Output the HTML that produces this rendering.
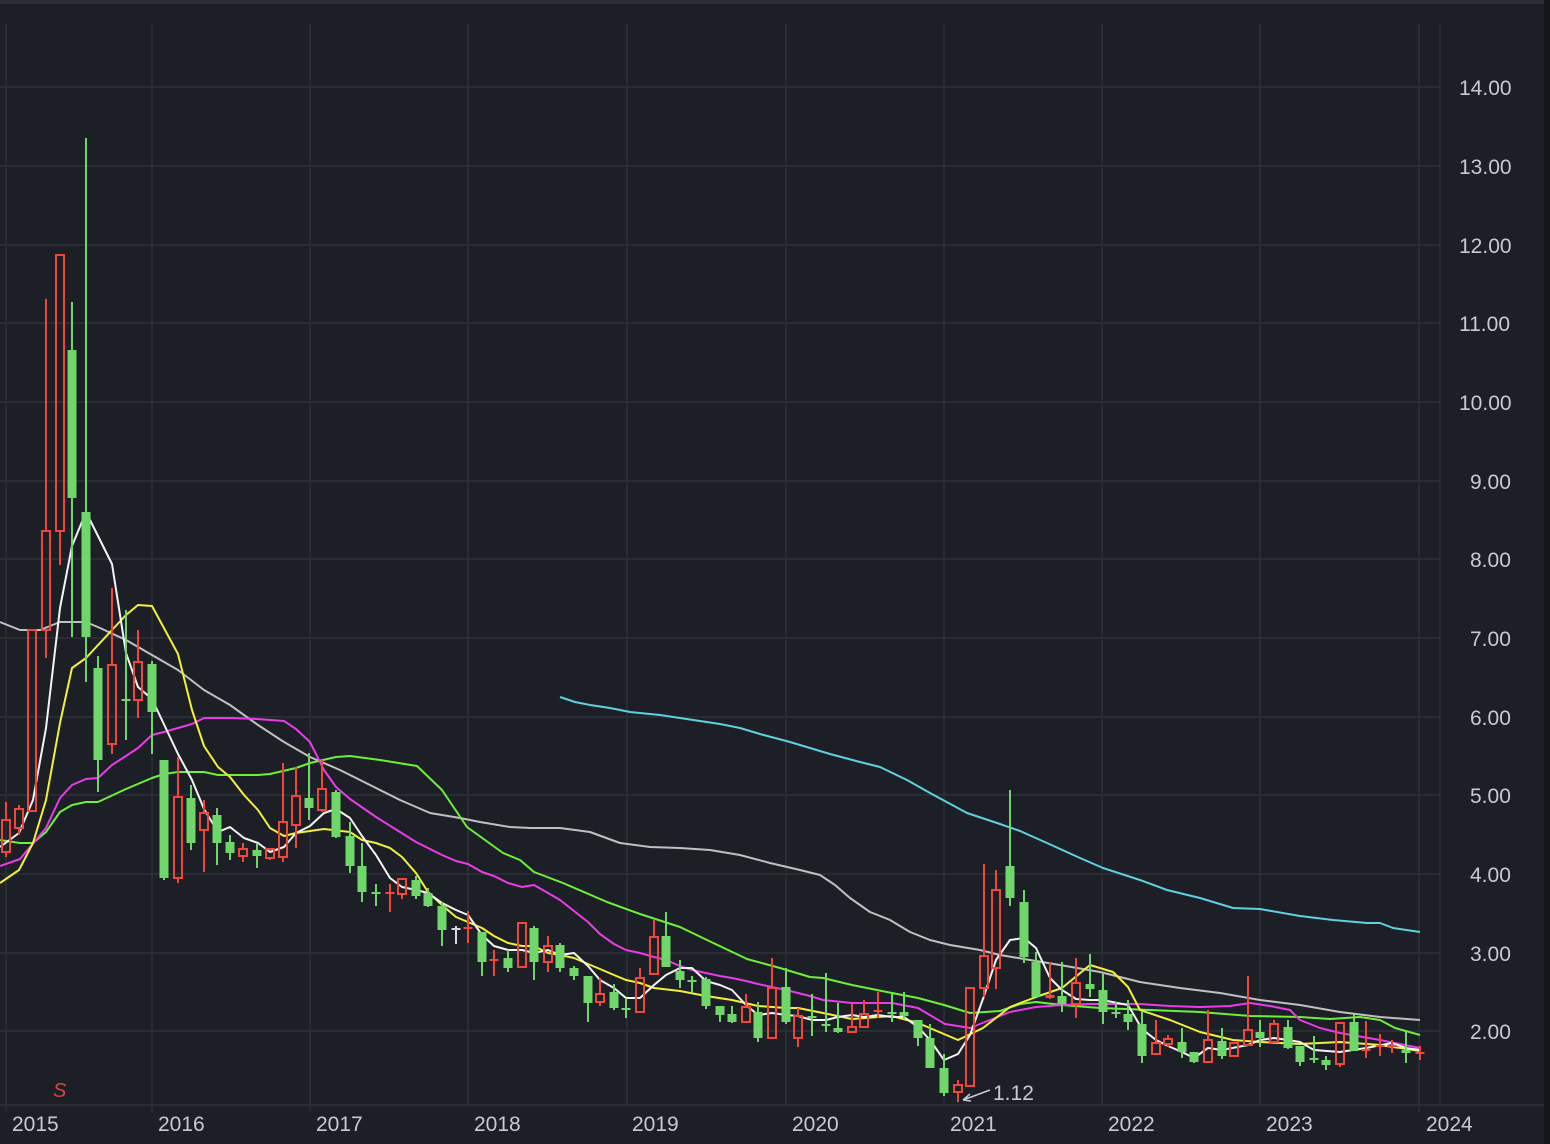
<!DOCTYPE html>
<html><head><meta charset="utf-8"><style>
html,body{margin:0;padding:0;background:#1d1f26;width:1550px;height:1144px;overflow:hidden}
svg{display:block}
text{font-family:"Liberation Sans",sans-serif}
</style></head><body>
<svg id="c" width="1550" height="1144" viewBox="0 0 1550 1144" xmlns="http://www.w3.org/2000/svg">
<rect x="0" y="0" width="1550" height="1144" fill="#1d1f26"/>
<rect x="0" y="0" width="1550" height="4" fill="#2b2d36"/>
<rect x="1544" y="0" width="6" height="1144" fill="#141519"/>
<g id="grid" stroke="#2a2c34" stroke-width="2"></g>
<line x1="0" y1="1105" x2="1544" y2="1105" stroke="#2a2c34" stroke-width="2"/>
<g id="ma" fill="none" stroke-width="2" stroke-linejoin="round"></g>
<g id="cd"></g>
<g fill="#c9cad1" font-size="21">
<text x="1459" y="95">14.00</text><text x="1459" y="174">13.00</text><text x="1459" y="253">12.00</text>
<text x="1459" y="331">11.00</text><text x="1459" y="410">10.00</text><text x="1470" y="489">9.00</text>
<text x="1470" y="567">8.00</text><text x="1470" y="646">7.00</text><text x="1470" y="725">6.00</text>
<text x="1470" y="803">5.00</text><text x="1470" y="882">4.00</text><text x="1470" y="961">3.00</text>
<text x="1470" y="1039">2.00</text>
<text x="12" y="1131">2015</text><text x="158" y="1131">2016</text><text x="316" y="1131">2017</text>
<text x="474" y="1131">2018</text><text x="632" y="1131">2019</text><text x="792" y="1131">2020</text>
<text x="950" y="1131">2021</text><text x="1108" y="1131">2022</text><text x="1266" y="1131">2023</text>
<text x="1426" y="1131">2024</text>
<text x="993" y="1100">1.12</text>
</g>
<text x="53" y="1097" fill="#d8453a" font-size="20" font-family="Liberation Serif,serif" font-style="italic">S</text>
<path d="M963 1100 L990 1090 M963 1100 L970 1094 M963 1100 L971 1101" stroke="#c9cad1" stroke-width="1.5" fill="none"/>
</svg>
<script>
var ns="http://www.w3.org/2000/svg",g=document.getElementById('grid'),m=document.getElementById('ma'),cd=document.getElementById('cd');
function el(p,t,a){var e=document.createElementNS(ns,t);for(var k in a)e.setAttribute(k,a[k]);p.appendChild(e);return e}
[6,152,310,468,627,786,944,1102,1260,1419,1440].forEach(function(x){el(g,'line',{x1:x,y1:24,x2:x,y2:(x==1440?1105:1104)})});
[87,166,245,323,402,481,559,638,717,795,874,953,1031].forEach(function(y){el(g,'line',{x1:0,y1:y,x2:1440,y2:y})});
el(g,'line',{x1:6,y1:1105,x2:6,y2:1112});el(g,'line',{x1:152,y1:1105,x2:152,y2:1112});el(g,'line',{x1:310,y1:1105,x2:310,y2:1112});el(g,'line',{x1:1419,y1:1105,x2:1419,y2:1112});
var L={
'#5fd0e0':"560,697 575,702 590,705 610,708 630,712 660,715 680,718 700,721 720,724 740,728 760,734 790,742 810,748 830,754 860,762 880,767 907,780 930,793 967,813 997,823 1020,831 1047,843 1080,858 1103,868 1140,880 1167,890 1200,898 1233,908 1260,909 1300,916 1333,920 1367,923 1380,923 1393,928 1420,932",
'#c0c0c0':"0,622 20,630 40,630 60,622 86,622 100,628 126,640 152,655 178,670 204,690 230,705 258,725 284,742 310,757 340,770 370,785 400,800 430,813 460,818 480,822 510,827 530,828 560,828 590,832 620,843 650,847 680,848 710,850 740,855 770,863 800,870 820,875 835,885 850,898 870,912 890,920 910,932 930,940 950,945 980,950 1000,955 1030,960 1060,965 1100,972 1140,982 1180,988 1220,993 1260,1000 1300,1005 1340,1012 1380,1017 1420,1020",
'#6ef03a':"0,840 20,843 33,843 46,832 60,812 72,805 86,802 98,802 126,789 152,778 164,774 178,772 204,772 218,775 258,775 270,774 296,768 310,763 336,757 350,756 380,760 417,766 442,790 467,827 503,853 520,860 534,872 563,883 607,902 640,914 680,927 707,940 747,959 780,968 810,977 823,978 852,985 892,993 918,998 944,1005 970,1013 1000,1011 1020,1004 1036,1002 1062,1005 1100,1008 1150,1010 1200,1012 1250,1016 1300,1017 1330,1019 1360,1017 1380,1020 1395,1028 1420,1035",
'#e83ce8':"0,866 20,859 46,828 60,798 72,785 86,779 98,778 112,765 126,756 138,748 152,735 164,732 178,728 192,724 204,718 230,718 257,719 284,721 296,729 310,742 324,770 336,787 350,799 376,817 400,832 416,842 428,848 442,855 456,861 468,864 482,872 494,876 508,883 522,887 534,885 548,893 560,900 574,911 588,922 600,934 614,944 626,950 640,953 654,957 666,960 680,966 692,970 706,973 720,976 732,978 746,981 758,984 772,987 786,990 810,996 823,1000 852,1003 892,1003 918,1008 945,1024 970,1028 990,1020 1010,1012 1036,1007 1062,1005 1090,1004 1140,1004 1170,1006 1200,1007 1230,1006 1250,1003 1270,1006 1290,1010 1300,1020 1320,1028 1340,1033 1380,1040 1420,1048",
'#f4f03a':"0,883 19,870 33,843 46,800 60,723 72,668 86,658 112,630 126,615 138,605 152,606 178,654 192,710 204,746 218,767 230,777 244,795 258,810 270,828 284,836 296,833 324,829 350,832 362,840 376,843 390,848 402,857 416,873 428,892 442,905 456,917 468,922 482,928 494,936 508,943 522,946 534,946 548,953 560,955 574,958 588,964 600,969 614,975 626,980 640,983 654,988 680,991 706,996 732,1000 758,1006 786,1008 798,1008 823,1013 852,1019 892,1016 918,1023 958,1040 983,1028 1010,1007 1036,997 1062,988 1090,965 1113,972 1128,987 1140,1010 1170,1020 1200,1032 1233,1040 1260,1042 1300,1044 1340,1042 1380,1045 1420,1051",
'#f4f4f4':"0,847 19,833 33,800 46,728 60,608 72,546 86,512 112,564 126,653 138,687 152,699 178,754 192,780 204,809 218,832 230,827 244,838 258,843 270,852 284,847 296,833 310,826 324,813 336,809 350,818 362,836 376,855 390,878 402,887 416,890 428,893 442,903 456,910 468,915 482,935 494,946 508,950 522,950 534,953 548,950 560,955 574,953 588,966 600,980 614,988 626,998 640,998 654,985 666,975 680,968 692,968 706,981 720,985 732,990 746,1005 758,1015 772,1013 786,1015 798,1016 812,1020 826,1020 838,1017 852,1015 864,1017 878,1015 892,1017 904,1017 918,1027 930,1040 944,1060 958,1054 970,1035 984,996 996,960 1010,940 1024,938 1036,948 1050,978 1062,990 1076,999 1090,1000 1102,1000 1128,1005 1142,1029 1156,1040 1168,1046 1182,1052 1194,1058 1208,1048 1222,1050 1248,1045 1260,1040 1274,1038 1288,1040 1300,1042 1314,1050 1340,1052 1366,1048 1392,1043 1406,1048 1420,1050"};
for(var c in L)el(m,'polyline',{points:L[c],stroke:c});
var D=[
[6,820,852,802,857,'r'],[19,809,828,805,835,'r'],[32,630,811,630,812,'r'],[46,531,630,299,658,'r'],[60,255,531,255,565,'r'],
[72,350,498,302,637,'g'],[86,512,637,138,682,'g'],[98,668,760,656,792,'g'],[112,665,744,588,754,'r'],[126,699,701,610,740,'g'],
[138,662,700,630,718,'r'],[152,664,712,661,754,'g'],[164,760,878,760,880,'g'],[178,797,878,757,883,'r'],[191,798,843,785,850,'g'],
[204,813,830,800,872,'r'],[217,815,843,808,865,'g'],[230,842,853,835,860,'g'],[243,849,856,843,862,'r'],[257,850,856,843,868,'g'],
[270,849,858,848,860,'r'],[283,822,857,763,862,'r'],[296,796,825,767,848,'r'],[309,798,808,753,820,'g'],[322,789,810,760,812,'r'],
[336,792,837,790,838,'g'],[350,836,866,822,873,'g'],[362,866,892,843,902,'g'],[376,892,894,884,906,'g'],[390,892,894,884,912,'r'],
[402,879,894,878,899,'r'],[416,880,896,876,899,'g'],[428,893,906,888,907,'g'],[442,906,930,902,946,'g'],[456,928,930,926,944,'w'],
[468,927,929,911,943,'r'],[482,932,962,932,976,'g'],[494,959,961,950,976,'r'],[508,958,968,950,972,'g'],[522,923,967,922,968,'r'],
[534,928,962,926,980,'g'],[548,946,962,936,972,'r'],[560,945,968,943,972,'g'],[574,968,976,966,980,'g'],[588,976,1003,976,1022,'g'],
[600,994,1002,978,1006,'r'],[614,992,1008,984,1010,'g'],[626,1008,1010,998,1018,'g'],[640,978,1012,968,1012,'r'],[654,937,974,919,975,'r'],
[666,936,967,912,967,'g'],[680,971,980,960,988,'g'],[692,980,982,976,993,'g'],[706,979,1006,977,1009,'g'],[720,1006,1015,1006,1022,'g'],
[732,1014,1022,1006,1023,'g'],[746,1007,1022,994,1023,'r'],[758,1012,1038,1002,1042,'g'],[772,988,1038,958,1039,'r'],[786,987,1022,968,1024,'g'],
[798,1016,1038,1008,1047,'r'],[812,1016,1018,994,1036,'g'],[826,1024,1026,973,1032,'g'],[838,1028,1032,1003,1033,'g'],[852,1027,1032,1004,1032,'r'],
[864,1014,1027,1000,1027,'r'],[878,1010,1012,992,1018,'r'],[892,1012,1014,994,1022,'g'],[904,1012,1016,992,1019,'g'],[918,1020,1038,1020,1046,'g'],
[930,1038,1068,1024,1068,'g'],[944,1068,1093,1054,1096,'g'],[958,1085,1092,1080,1102,'r'],[970,988,1086,988,1086,'r'],[984,956,988,864,997,'r'],
[996,890,968,870,989,'r'],[1010,866,898,790,906,'g'],[1024,902,957,890,963,'g'],[1036,962,997,952,997,'g'],[1050,995,998,962,999,'r'],
[1062,996,1004,962,1012,'g'],[1076,983,1004,958,1018,'r'],[1090,984,989,954,997,'g'],[1103,990,1012,974,1024,'g'],[1116,1012,1014,1002,1018,'g'],
[1128,1014,1022,1000,1030,'g'],[1142,1024,1056,1012,1063,'g'],[1156,1043,1054,1020,1055,'r'],[1168,1039,1044,1035,1047,'r'],[1182,1042,1052,1028,1058,'g'],
[1194,1052,1062,1052,1063,'g'],[1208,1040,1062,1010,1062,'r'],[1222,1041,1056,1028,1059,'g'],[1234,1043,1056,1043,1057,'r'],[1248,1030,1045,976,1045,'r'],
[1260,1032,1038,1020,1047,'g'],[1274,1024,1042,1020,1043,'r'],[1288,1027,1048,1020,1049,'g'],[1300,1046,1062,1046,1066,'g'],[1314,1058,1060,1036,1063,'g'],
[1326,1060,1065,1056,1070,'g'],[1340,1023,1064,1023,1067,'r'],[1354,1022,1051,1014,1051,'g'],[1366,1049,1051,1021,1058,'r'],[1380,1045,1047,1034,1056,'r'],
[1392,1045,1047,1040,1053,'r'],[1406,1050,1053,1032,1063,'g'],[1420,1052,1054,1046,1060,'r']];
D.forEach(function(d){var x=d[0],t=d[1],b=d[2],h=d[3],l=d[4],k=d[5];
var col=k=='r'?'#f0473a':(k=='g'?'#6fd66a':'#d8d8e0');
if(k=='r'){el(cd,'line',{x1:x,y1:h,x2:x,y2:t,stroke:col,'stroke-width':2});el(cd,'line',{x1:x,y1:b,x2:x,y2:l,stroke:col,'stroke-width':2});
 if(b-t<4){el(cd,'rect',{x:x-4.5,y:t,width:9,height:Math.max(b-t,2),fill:col});}else el(cd,'rect',{x:x-4,y:t,width:8,height:b-t,fill:'none',stroke:col,'stroke-width':2});}
else{el(cd,'line',{x1:x,y1:h,x2:x,y2:l,stroke:col,'stroke-width':2});el(cd,'rect',{x:x-4.5,y:t,width:9,height:Math.max(b-t,2),fill:col});}
});
</script>
</body></html>
